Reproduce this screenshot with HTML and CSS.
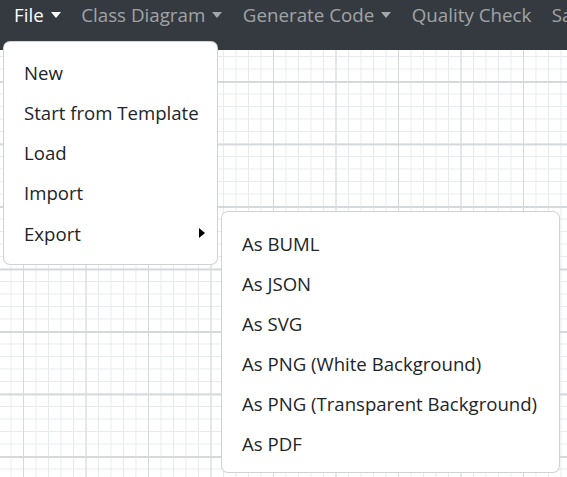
FILE: index.html
```html
<!DOCTYPE html>
<html>
<head>
<meta charset="utf-8">
<link rel="stylesheet" href="styles.css">
</head>
<body>
<nav class="navbar">
  <ul class="nav">
    <li class="nav-item active"><span class="nav-link">File<span class="caret"></span></span></li>
    <li class="nav-item"><span class="nav-link">Class Diagram<span class="caret"></span></span></li>
    <li class="nav-item"><span class="nav-link">Generate Code<span class="caret"></span></span></li>
    <li class="nav-item"><span class="nav-link">Quality Check</span></li>
    <li class="nav-item"><span class="nav-link">Save</span></li>
  </ul>
</nav>
<main class="canvas"></main>

<div class="menu file-menu">
  <div class="item">New</div>
  <div class="item">Start from Template</div>
  <div class="item">Load</div>
  <div class="item">Import</div>
  <div class="item has-sub">Export<span class="rcaret"></span></div>
</div>

<div class="menu sub-menu">
  <div class="item">As BUML</div>
  <div class="item">As JSON</div>
  <div class="item">As SVG</div>
  <div class="item">As PNG (White Background)</div>
  <div class="item">As PNG (Transparent Background)</div>
  <div class="item">As PDF</div>
</div>
</body>
</html>
```
FILE: styles.css
```css
* { box-sizing: border-box; }
html, body { margin: 0; padding: 0; height: 100%; overflow: hidden; }
body {
  font-family: "Open Sans", "Noto Sans", sans-serif;
  font-size: 18.6px;
  color: #212529;
  background: #fff;
  position: relative;
}
.navbar {
  height: 50px;
  background: #343a40;
  padding: 0 0 0 4px;
  overflow: hidden;
}
.nav {
  list-style: none;
  margin: 0;
  padding: 0;
  display: flex;
  white-space: nowrap;
}
.nav-link {
  display: flex;
  align-items: center;
  padding: 0 10.5px 0 10px;
  height: 29px;
  line-height: 29px;
  color: rgba(255,255,255,0.55);
  font-size: 18.75px;
}
.nav-item.active .nav-link { color: #fff; }
.caret {
  display: inline-block;
  margin-left: 7px;
  margin-top: 1px;
  border-top: 6px solid currentColor;
  border-left: 5.5px solid transparent;
  border-right: 5.5px solid transparent;
}
.canvas {
  height: calc(100% - 50px);
  background-color: #fff;
  background-image:
    linear-gradient(to right, #d6d9dc 1px, transparent 1px),
    linear-gradient(to bottom, #d6d9dc 2px, transparent 2px),
    linear-gradient(to right, #e8ebee 1px, transparent 1px),
    linear-gradient(to bottom, #e8ebee 1px, transparent 1px);
  background-size: 62.5px 62.5px, 62.5px 62.5px, 12.5px 12.5px, 12.5px 12.5px;
  background-position: 23px 0, 0 31px, 23px 0, 0 6px;
}
.menu {
  position: absolute;
  background: #fff;
  border: 1px solid rgba(0,0,0,0.175);
  border-radius: 7px;
  padding: 10px 0;
  white-space: nowrap;
}
.file-menu { left: 3px; top: 41px; width: 215px; }
.sub-menu { left: 221px; top: 211px; width: 339px; }
.sub-menu .item { padding-top: 6.5px; padding-bottom: 3.5px; }
.item {
  padding: 6px 20px 4px;
  line-height: 30px;
  display: flex;
  align-items: center;
}
.has-sub { justify-content: space-between; padding-top: 7px; padding-bottom: 5px; }
.rcaret {
  display: inline-block;
  border-left: 6px solid #000;
  border-top: 5px solid transparent;
  border-bottom: 5px solid transparent;
  margin-right: -8px;
  margin-top: -2px;
}
```
